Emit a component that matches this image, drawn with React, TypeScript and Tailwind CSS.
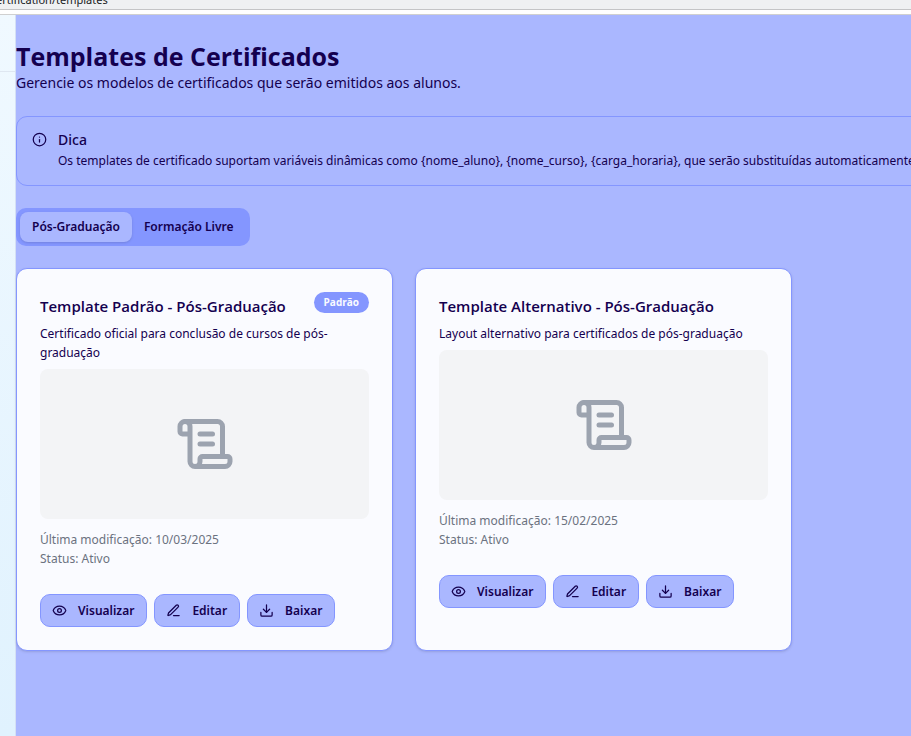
import { useState } from "react";
import type { ReactNode } from "react";
import { ScrollText } from "lucide-react";

type Template = {
  title: string;
  description: string;
  modified: string;
  status: string;
  isDefault?: boolean;
};

const TEMPLATES: Template[] = [
  {
    title: "Template Padrão - Pós-Graduação",
    description: "Certificado oficial para conclusão de cursos de pós-graduação",
    modified: "10/03/2025",
    status: "Ativo",
    isDefault: true,
  },
  {
    title: "Template Alternativo - Pós-Graduação",
    description: "Layout alternativo para certificados de pós-graduação",
    modified: "15/02/2025",
    status: "Ativo",
  },
];

const TABS = ["Pós-Graduação", "Formação Livre"];

function Icon({ children }: { children: ReactNode }) {
  return (
    <svg
      viewBox="0 0 24 24"
      fill="none"
      stroke="currentColor"
      strokeWidth="2"
      strokeLinecap="round"
      strokeLinejoin="round"
      aria-hidden="true"
      className="size-[15px] shrink-0"
    >
      {children}
    </svg>
  );
}

function ActionButton({ icon, label }: { icon: ReactNode; label: string }) {
  return (
    <button
      type="button"
      className="flex h-[33px] items-center gap-[11px] rounded-[10px] border border-[#8496ff] bg-[#aab7ff] pr-[12px] pl-[11px] text-[12px] font-semibold"
    >
      <Icon>{icon}</Icon>
      {label}
    </button>
  );
}

function TemplateCard({ template }: { template: Template }) {
  return (
    <article className="rounded-[11px] border border-[#8496ff] bg-[#fafbff] p-[23px] shadow-sm">
      <div className="flex items-start justify-between font-['Open_Sans','Noto_Sans',sans-serif]">
        <h2 className="text-[15px] leading-[28px] font-semibold">{template.title}</h2>
        {template.isDefault && (
          <span className="rounded-full bg-[#8496ff] px-[10px] text-[10px] leading-[21px] font-bold text-[#fafbff]">
            Padrão
          </span>
        )}
      </div>
      <p className="mt-[4px] text-[12px] leading-[19px]">{template.description}</p>
      <div className="mt-[7px] flex h-[150px] items-center justify-center rounded-lg bg-[#f3f4f6]">
        <ScrollText size={60} className="text-[#9ca3af]" aria-hidden="true" />
      </div>
      <div className="mt-[11px] text-[12px] leading-[19px] text-[#6b7280]">
        <p>Última modificação: {template.modified}</p>
        <p>Status: {template.status}</p>
      </div>
      <div className="mt-[26px] flex gap-[7px]">
        <ActionButton
          label="Visualizar"
          icon={
            <>
              <path d="M2.062 12.348a1 1 0 0 1 0-.696 10.75 10.75 0 0 1 19.876 0 1 1 0 0 1 0 .696 10.75 10.75 0 0 1-19.876 0" />
              <circle cx="12" cy="12" r="3" />
            </>
          }
        />
        <ActionButton
          label="Editar"
          icon={
            <>
              <path d="M12 20h9" />
              <path d="M16.376 3.622a1 1 0 0 1 3.002 3.002L7.368 18.635a2 2 0 0 1-.855.506l-2.872.838a.5.5 0 0 1-.62-.62l.838-2.872a2 2 0 0 1 .506-.854z" />
            </>
          }
        />
        <ActionButton
          label="Baixar"
          icon={
            <>
              <path d="M21 15v4a2 2 0 0 1-2 2H5a2 2 0 0 1-2-2v-4" />
              <path d="m7 10 5 5 5-5" />
              <path d="M12 15V3" />
            </>
          }
        />
      </div>
    </article>
  );
}

export default function App() {
  const [active, setActive] = useState(TABS[0]);

  return (
    <div className="flex min-h-screen flex-col overflow-hidden bg-white font-['Noto_Sans','Open_Sans',sans-serif] text-[#14004f]">
      <header className="border-b border-[#d0d0d0] bg-white pb-[4px]">
        <div className="flex h-[10px] items-end overflow-hidden border-b border-[#c4c4c6] bg-[#eff0f2] pb-px">
          <span className="-ml-[4px] text-[11px] leading-[16px] text-[#202124]">ertification/templates</span>
        </div>
      </header>
      <div className="flex flex-1">
        <aside className="w-[16px] shrink-0 border-r border-[#d5e0f5] bg-linear-to-b from-[#f0f9ff] to-[#e0f2fe]">
          <div className="h-[57px] border-b border-[#dfe7f1]" />
        </aside>
        <main className="min-w-[1175px] flex-1 bg-[#aab7ff] pt-[23px]">
          <h1 className="font-['Open_Sans','Noto_Sans',sans-serif] text-[25px] leading-[36px] font-bold">
            Templates de Certificados
          </h1>
          <p className="text-[14px] leading-[18px]">
            Gerencie os modelos de certificados que serão emitidos aos alunos.
          </p>

          <section className="mt-[24px] flex gap-[11px] rounded-[11px] border border-[#8496ff] px-[15px] py-[14px]">
            <div className="pt-[1px]">
              <Icon>
                <circle cx="12" cy="12" r="10" />
                <path d="M12 16v-4" />
                <path d="M12 8h.01" />
              </Icon>
            </div>
            <div>
              <h2 className="text-[14px] leading-[18px] font-medium">Dica</h2>
              <p className="pt-[2px] text-[12px] leading-[20px] whitespace-nowrap">
                Os templates de certificado suportam variáveis dinâmicas como {"{nome_aluno}"}, {"{nome_curso}"},{" "}
                {"{carga_horaria}"}, que serão substituídas automaticamente.
              </p>
            </div>
          </section>

          <div role="tablist" className="mt-[22px] inline-flex rounded-[10px] bg-[#8496ff] p-[4px]">
            {TABS.map((tab) => (
              <button
                key={tab}
                type="button"
                role="tab"
                aria-selected={tab === active}
                onClick={() => setActive(tab)}
                className={`h-[30px] rounded-[8px] px-[12px] text-[12px] font-semibold ${
                  tab === active ? "bg-[#aab7ff] shadow-sm" : ""
                }`}
              >
                {tab}
              </button>
            ))}
          </div>

          <div className="mt-[22px] grid grid-cols-3 gap-[22px]">
            {TEMPLATES.map((template) => (
              <TemplateCard key={template.title} template={template} />
            ))}
          </div>
        </main>
      </div>
    </div>
  );
}
